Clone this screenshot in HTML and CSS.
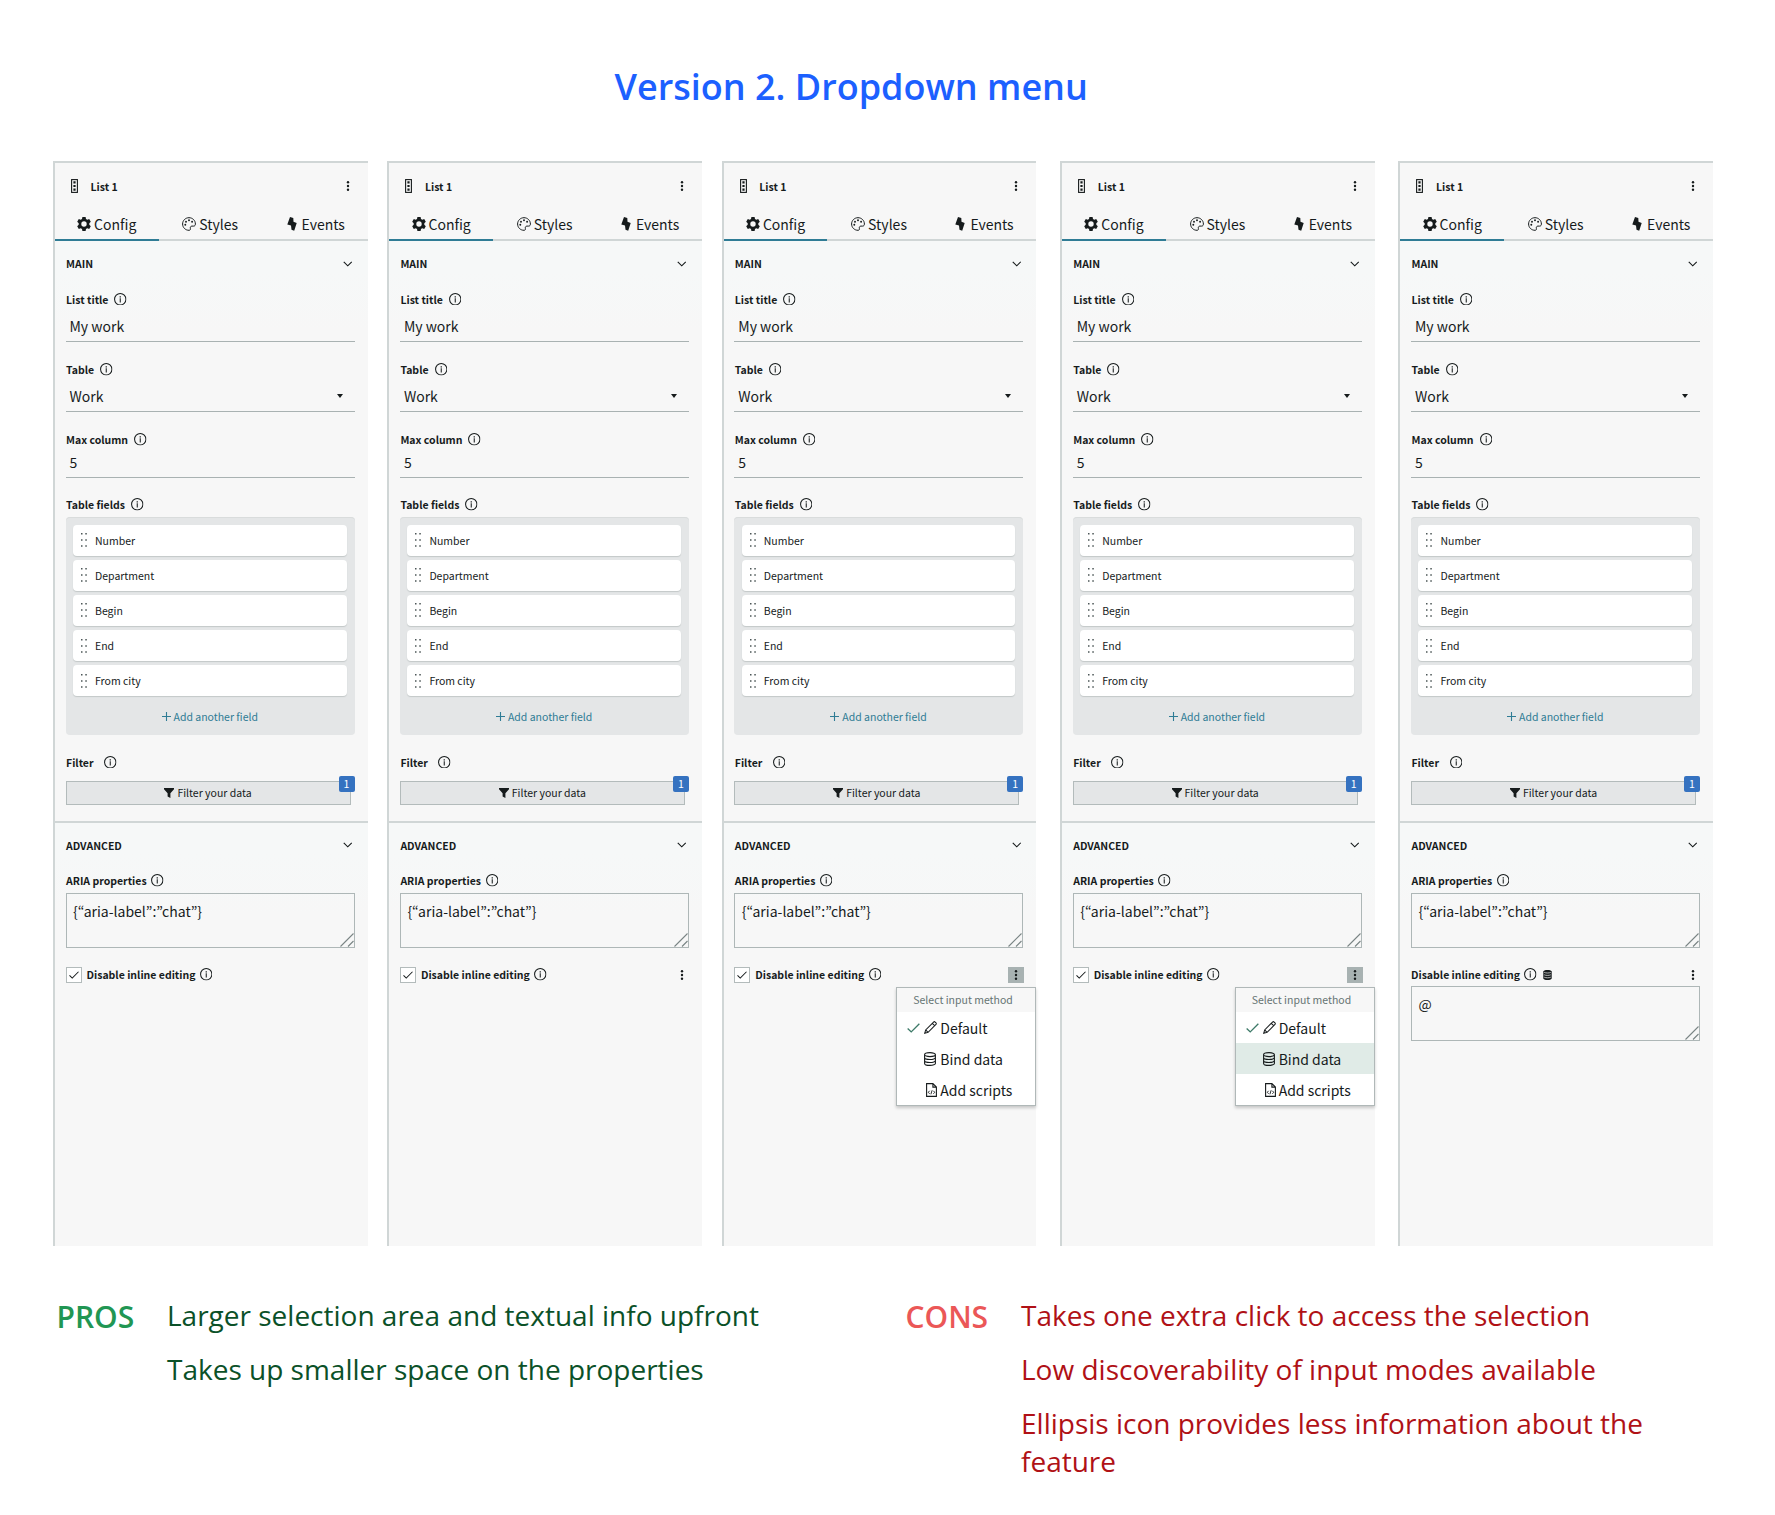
FILE: index.html
```html
<!DOCTYPE html>
<html lang="en">
<head>
<meta charset="utf-8">
<title>Version 2. Dropdown menu</title>
<link rel="stylesheet" href="styles.css">
</head>
<body>
<svg class="sprite" aria-hidden="true">
  <symbol id="list" viewBox="0 0 7 14"><rect x=".6" y=".6" width="5.8" height="12.8" fill="none" stroke="currentColor" stroke-width="1.1"/><path d="M2.4 2.2h2.2v2.2H2.400zM2.400 5.900h2.200v2.200H2.400zM2.400 9.600h2.200v2.200H2.400z"/></symbol>
  <symbol id="dots" viewBox="0 0 4 10"><circle cx="2" cy="1.200" r="1.200"/><circle cx="2" cy="5" r="1.200"/><circle cx="2" cy="8.800" r="1.200"/></symbol>
  <symbol id="gear" viewBox="0 0 14 14"><path fill-rule="evenodd" d="M5.400 0h3.200l.4 1.900 1.300.75 1.900-.65 1.600 2.700L12.300 6.200v1.600l1.500 1.500-1.600 2.700-1.900-.65-1.300.75-.4 1.900H5.400L5 12.100l-1.300-.75-1.900.65-1.600-2.700 1.500-1.500V6.200L.2 4.700 1.800 2l1.900.65L5 1.900zM7 4.300a2.700 2.700 0 1 0 0 5.400 2.700 2.700 0 0 0 0-5.400z"/></symbol>
  <symbol id="palette" viewBox="0 0 14 14"><path d="M7 .7C3.400.7.6 3.500.6 7S3.400 13.300 7 13.300c1.100 0 1.700-.8 1.400-1.800-.4-1.300.2-2.400 1.600-2.400h1.700c1.100 0 1.700-.9 1.700-2.100C13.400 3.500 10.600.7 7 .7z" fill="none" stroke="currentColor" stroke-width="1"/><circle cx="3.300" cy="7.700" r=".95"/><circle cx="4" cy="4.700" r=".95"/><circle cx="7" cy="3.200" r=".95"/><circle cx="10.100" cy="4.700" r=".95"/></symbol>
  <symbol id="bolt" viewBox="0 0 10 14"><path d="M3 0l3.300 1.100.2 3.700 3.200 1.300-2.500 7.700-2.700-1.100-.5-4.200L.3 7.400z"/></symbol>
  <symbol id="chevron" viewBox="0 0 10 6"><path d="M.8.7L5 4.900 9.200.7" fill="none" stroke="currentColor" stroke-width="1.200"/></symbol>
  <symbol id="info" viewBox="0 0 12 12"><circle cx="6" cy="6" r="5.450" fill="none" stroke="currentColor" stroke-width="1"/><path d="M5.500 5.100h1v3.900h-1zM5.400 3h1.200v1.200H5.400z"/></symbol>
  <symbol id="grip" viewBox="0 0 6 14"><path d="M0 0h1.500v1.500H0zM4.300 0h1.500v1.500H4.300zM0 6.200h1.500v1.500H0zM4.300 6.200h1.500v1.500H4.300zM0 12.300h1.500v1.500H0zM4.300 12.300h1.500v1.500H4.300z"/></symbol>
  <symbol id="plus" viewBox="0 0 9 9"><path d="M4.500 0v9M0 4.500h9" fill="none" stroke="currentColor" stroke-width="1.100"/></symbol>
  <symbol id="funnel" viewBox="0 0 10 10"><path d="M0 0h10v1.300L6.400 5.200V10L3.600 8.600V5.200L0 1.300z"/></symbol>
  <symbol id="grab" viewBox="0 0 14 14"><path d="M.5 13.500l13-13M8 13.500L13.500 8" fill="none" stroke="currentColor" stroke-width="1.100"/></symbol>
  <symbol id="check" viewBox="0 0 12 9"><path d="M.6 4.900l3.300 3.200L11.400.6" fill="none" stroke="currentColor" stroke-width="1.250"/></symbol>
  <symbol id="pencil" viewBox="0 0 14 14"><path d="M.8 13.200l1-3.600L10.300 1.100c.5-.5 1.200-.5 1.700 0l.9.900c.5.5.5 1.200 0 1.700l-8.500 8.500zM1.800 9.600l2.600 2.600M8.900 2.500l2.600 2.600" fill="none" stroke="currentColor" stroke-width="1.100"/></symbol>
  <symbol id="db" viewBox="0 0 12 14"><path d="M.6 2.600C.6 1.500 3 .6 6 .6s5.400.9 5.400 2-2.400 2-5.400 2-5.400-.9-5.400-2zv8.800c0 1.100 2.400 2 5.400 2s5.400-.9 5.400-2V2.600M.6 5.500c0 1.100 2.400 2 5.400 2s5.400-.9 5.400-2M.6 8.500c0 1.100 2.400 2 5.400 2s5.400-.9 5.400-2" fill="none" stroke="currentColor" stroke-width="1.100"/></symbol>
  <symbol id="dbfill" viewBox="0 0 9 10"><path d="M.3 1.600C.3.700 2 .1 4.500.1s4.200.6 4.200 1.500v6.800c0 .9-1.700 1.500-4.200 1.500S.3 9.300.3 8.400z"/><path class="bands" d="M1.200 2.400c1.700.8 4.900.8 6.600 0M1.200 4.800c1.700.8 4.900.8 6.600 0M1.200 7.200c1.700.8 4.900.8 6.600 0"/></symbol>
  <symbol id="script" viewBox="0 0 11 14"><path d="M.6.600h6.300l3.500 3.500v9.300H.6zM6.900.6v3.500h3.500" fill="none" stroke="currentColor" stroke-width="1.100"/><path d="M3.600 7.800L2.300 9.300l1.300 1.500M7.400 7.800l1.300 1.500-1.300 1.500M6.100 7.300l-1.200 4" fill="none" stroke="currentColor" stroke-width=".9"/></symbol>
</svg>

<h1 class="title">Version 2. Dropdown menu</h1>

<main class="panels">
  <section class="panel">
    <header class="head"><svg class="i-list"><use href="#list"/></svg><b>List 1</b><svg class="i-dots"><use href="#dots"/></svg></header>
    <nav class="tabs"><a class="tab active"><svg class="i-gear"><use href="#gear"/></svg>Config</a><a class="tab"><svg class="i-palette"><use href="#palette"/></svg>Styles</a><a class="tab"><svg class="i-bolt"><use href="#bolt"/></svg>Events</a></nav>
    <div class="group main">
      <h2>MAIN<svg class="i-chev"><use href="#chevron"/></svg></h2>
      <div class="label">List title<svg class="i-info"><use href="#info"/></svg></div>
      <div class="value">My work</div>
      <div class="label">Table<svg class="i-info"><use href="#info"/></svg></div>
      <div class="value">Work<i class="caret"></i></div>
      <div class="label">Max column<svg class="i-info"><use href="#info"/></svg></div>
      <div class="value short">5</div>
      <div class="label">Table fields<svg class="i-info"><use href="#info"/></svg></div>
      <ul class="fields">
        <li><svg class="i-grip"><use href="#grip"/></svg>Number</li>
        <li><svg class="i-grip"><use href="#grip"/></svg>Department</li>
        <li><svg class="i-grip"><use href="#grip"/></svg>Begin</li>
        <li><svg class="i-grip"><use href="#grip"/></svg>End</li>
        <li><svg class="i-grip"><use href="#grip"/></svg>From city</li>
        <li class="add"><svg class="i-plus"><use href="#plus"/></svg>Add another field</li>
      </ul>
      <div class="label wide">Filter<svg class="i-info"><use href="#info"/></svg></div>
      <div class="filter"><svg class="i-funnel"><use href="#funnel"/></svg>Filter your data<span class="badge">1</span></div>
    </div>
    <div class="group">
      <h2>ADVANCED<svg class="i-chev"><use href="#chevron"/></svg></h2>
      <div class="label tight">ARIA properties<svg class="i-info"><use href="#info"/></svg></div>
      <div class="area">{“aria-label”:”chat”}<svg class="i-grab"><use href="#grab"/></svg></div>
      <div class="option"><span class="box"><svg class="i-check"><use href="#check"/></svg></span>Disable inline editing<svg class="i-info"><use href="#info"/></svg></div>
    </div>
  </section>

  <section class="panel">
    <header class="head"><svg class="i-list"><use href="#list"/></svg><b>List 1</b><svg class="i-dots"><use href="#dots"/></svg></header>
    <nav class="tabs"><a class="tab active"><svg class="i-gear"><use href="#gear"/></svg>Config</a><a class="tab"><svg class="i-palette"><use href="#palette"/></svg>Styles</a><a class="tab"><svg class="i-bolt"><use href="#bolt"/></svg>Events</a></nav>
    <div class="group main">
      <h2>MAIN<svg class="i-chev"><use href="#chevron"/></svg></h2>
      <div class="label">List title<svg class="i-info"><use href="#info"/></svg></div>
      <div class="value">My work</div>
      <div class="label">Table<svg class="i-info"><use href="#info"/></svg></div>
      <div class="value">Work<i class="caret"></i></div>
      <div class="label">Max column<svg class="i-info"><use href="#info"/></svg></div>
      <div class="value short">5</div>
      <div class="label">Table fields<svg class="i-info"><use href="#info"/></svg></div>
      <ul class="fields">
        <li><svg class="i-grip"><use href="#grip"/></svg>Number</li>
        <li><svg class="i-grip"><use href="#grip"/></svg>Department</li>
        <li><svg class="i-grip"><use href="#grip"/></svg>Begin</li>
        <li><svg class="i-grip"><use href="#grip"/></svg>End</li>
        <li><svg class="i-grip"><use href="#grip"/></svg>From city</li>
        <li class="add"><svg class="i-plus"><use href="#plus"/></svg>Add another field</li>
      </ul>
      <div class="label wide">Filter<svg class="i-info"><use href="#info"/></svg></div>
      <div class="filter"><svg class="i-funnel"><use href="#funnel"/></svg>Filter your data<span class="badge">1</span></div>
    </div>
    <div class="group">
      <h2>ADVANCED<svg class="i-chev"><use href="#chevron"/></svg></h2>
      <div class="label tight">ARIA properties<svg class="i-info"><use href="#info"/></svg></div>
      <div class="area">{“aria-label”:”chat”}<svg class="i-grab"><use href="#grab"/></svg></div>
      <div class="option"><span class="box"><svg class="i-check"><use href="#check"/></svg></span>Disable inline editing<svg class="i-info"><use href="#info"/></svg><span class="more"><svg><use href="#dots"/></svg></span></div>
    </div>
  </section>

  <section class="panel">
    <header class="head"><svg class="i-list"><use href="#list"/></svg><b>List 1</b><svg class="i-dots"><use href="#dots"/></svg></header>
    <nav class="tabs"><a class="tab active"><svg class="i-gear"><use href="#gear"/></svg>Config</a><a class="tab"><svg class="i-palette"><use href="#palette"/></svg>Styles</a><a class="tab"><svg class="i-bolt"><use href="#bolt"/></svg>Events</a></nav>
    <div class="group main">
      <h2>MAIN<svg class="i-chev"><use href="#chevron"/></svg></h2>
      <div class="label">List title<svg class="i-info"><use href="#info"/></svg></div>
      <div class="value">My work</div>
      <div class="label">Table<svg class="i-info"><use href="#info"/></svg></div>
      <div class="value">Work<i class="caret"></i></div>
      <div class="label">Max column<svg class="i-info"><use href="#info"/></svg></div>
      <div class="value short">5</div>
      <div class="label">Table fields<svg class="i-info"><use href="#info"/></svg></div>
      <ul class="fields">
        <li><svg class="i-grip"><use href="#grip"/></svg>Number</li>
        <li><svg class="i-grip"><use href="#grip"/></svg>Department</li>
        <li><svg class="i-grip"><use href="#grip"/></svg>Begin</li>
        <li><svg class="i-grip"><use href="#grip"/></svg>End</li>
        <li><svg class="i-grip"><use href="#grip"/></svg>From city</li>
        <li class="add"><svg class="i-plus"><use href="#plus"/></svg>Add another field</li>
      </ul>
      <div class="label wide">Filter<svg class="i-info"><use href="#info"/></svg></div>
      <div class="filter"><svg class="i-funnel"><use href="#funnel"/></svg>Filter your data<span class="badge">1</span></div>
    </div>
    <div class="group">
      <h2>ADVANCED<svg class="i-chev"><use href="#chevron"/></svg></h2>
      <div class="label tight">ARIA properties<svg class="i-info"><use href="#info"/></svg></div>
      <div class="area">{“aria-label”:”chat”}<svg class="i-grab"><use href="#grab"/></svg></div>
      <div class="option"><span class="box"><svg class="i-check"><use href="#check"/></svg></span>Disable inline editing<svg class="i-info"><use href="#info"/></svg><span class="more open"><svg><use href="#dots"/></svg></span>
        <div class="menu">
          <div class="menu-head">Select input method</div>
          <div class="item"><svg class="i-tick"><use href="#check"/></svg><svg class="i-pencil"><use href="#pencil"/></svg>Default</div>
          <div class="item"><svg class="i-db"><use href="#db"/></svg>Bind data</div>
          <div class="item"><svg class="i-script"><use href="#script"/></svg>Add scripts</div>
        </div>
      </div>
    </div>
  </section>

  <section class="panel">
    <header class="head"><svg class="i-list"><use href="#list"/></svg><b>List 1</b><svg class="i-dots"><use href="#dots"/></svg></header>
    <nav class="tabs"><a class="tab active"><svg class="i-gear"><use href="#gear"/></svg>Config</a><a class="tab"><svg class="i-palette"><use href="#palette"/></svg>Styles</a><a class="tab"><svg class="i-bolt"><use href="#bolt"/></svg>Events</a></nav>
    <div class="group main">
      <h2>MAIN<svg class="i-chev"><use href="#chevron"/></svg></h2>
      <div class="label">List title<svg class="i-info"><use href="#info"/></svg></div>
      <div class="value">My work</div>
      <div class="label">Table<svg class="i-info"><use href="#info"/></svg></div>
      <div class="value">Work<i class="caret"></i></div>
      <div class="label">Max column<svg class="i-info"><use href="#info"/></svg></div>
      <div class="value short">5</div>
      <div class="label">Table fields<svg class="i-info"><use href="#info"/></svg></div>
      <ul class="fields">
        <li><svg class="i-grip"><use href="#grip"/></svg>Number</li>
        <li><svg class="i-grip"><use href="#grip"/></svg>Department</li>
        <li><svg class="i-grip"><use href="#grip"/></svg>Begin</li>
        <li><svg class="i-grip"><use href="#grip"/></svg>End</li>
        <li><svg class="i-grip"><use href="#grip"/></svg>From city</li>
        <li class="add"><svg class="i-plus"><use href="#plus"/></svg>Add another field</li>
      </ul>
      <div class="label wide">Filter<svg class="i-info"><use href="#info"/></svg></div>
      <div class="filter"><svg class="i-funnel"><use href="#funnel"/></svg>Filter your data<span class="badge">1</span></div>
    </div>
    <div class="group">
      <h2>ADVANCED<svg class="i-chev"><use href="#chevron"/></svg></h2>
      <div class="label tight">ARIA properties<svg class="i-info"><use href="#info"/></svg></div>
      <div class="area">{“aria-label”:”chat”}<svg class="i-grab"><use href="#grab"/></svg></div>
      <div class="option"><span class="box"><svg class="i-check"><use href="#check"/></svg></span>Disable inline editing<svg class="i-info"><use href="#info"/></svg><span class="more open"><svg><use href="#dots"/></svg></span>
        <div class="menu">
          <div class="menu-head">Select input method</div>
          <div class="item"><svg class="i-tick"><use href="#check"/></svg><svg class="i-pencil"><use href="#pencil"/></svg>Default</div>
          <div class="item hover"><svg class="i-db"><use href="#db"/></svg>Bind data</div>
          <div class="item"><svg class="i-script"><use href="#script"/></svg>Add scripts</div>
        </div>
      </div>
    </div>
  </section>

  <section class="panel">
    <header class="head"><svg class="i-list"><use href="#list"/></svg><b>List 1</b><svg class="i-dots"><use href="#dots"/></svg></header>
    <nav class="tabs"><a class="tab active"><svg class="i-gear"><use href="#gear"/></svg>Config</a><a class="tab"><svg class="i-palette"><use href="#palette"/></svg>Styles</a><a class="tab"><svg class="i-bolt"><use href="#bolt"/></svg>Events</a></nav>
    <div class="group main">
      <h2>MAIN<svg class="i-chev"><use href="#chevron"/></svg></h2>
      <div class="label">List title<svg class="i-info"><use href="#info"/></svg></div>
      <div class="value">My work</div>
      <div class="label">Table<svg class="i-info"><use href="#info"/></svg></div>
      <div class="value">Work<i class="caret"></i></div>
      <div class="label">Max column<svg class="i-info"><use href="#info"/></svg></div>
      <div class="value short">5</div>
      <div class="label">Table fields<svg class="i-info"><use href="#info"/></svg></div>
      <ul class="fields">
        <li><svg class="i-grip"><use href="#grip"/></svg>Number</li>
        <li><svg class="i-grip"><use href="#grip"/></svg>Department</li>
        <li><svg class="i-grip"><use href="#grip"/></svg>Begin</li>
        <li><svg class="i-grip"><use href="#grip"/></svg>End</li>
        <li><svg class="i-grip"><use href="#grip"/></svg>From city</li>
        <li class="add"><svg class="i-plus"><use href="#plus"/></svg>Add another field</li>
      </ul>
      <div class="label wide">Filter<svg class="i-info"><use href="#info"/></svg></div>
      <div class="filter"><svg class="i-funnel"><use href="#funnel"/></svg>Filter your data<span class="badge">1</span></div>
    </div>
    <div class="group">
      <h2>ADVANCED<svg class="i-chev"><use href="#chevron"/></svg></h2>
      <div class="label tight">ARIA properties<svg class="i-info"><use href="#info"/></svg></div>
      <div class="area">{“aria-label”:”chat”}<svg class="i-grab"><use href="#grab"/></svg></div>
      <div class="option bound">Disable inline editing<svg class="i-info"><use href="#info"/></svg><svg class="i-dbfill"><use href="#dbfill"/></svg><span class="more"><svg><use href="#dots"/></svg></span></div>
      <div class="area">@<svg class="i-grab"><use href="#grab"/></svg></div>
    </div>
  </section>
</main>

<footer class="notes">
  <div class="note pros"><h3>PROS</h3><div><p>Larger selection area and textual info upfront</p><p>Takes up smaller space on the properties</p></div></div>
  <div class="note cons"><h3>CONS</h3><div><p>Takes one extra click to access the selection</p><p>Low discoverability of input modes available</p><p>Ellipsis icon provides less information about the feature</p></div></div>
</footer>
</body>
</html>
```

FILE: styles.css
```css
* { box-sizing: border-box; }
body {
  margin: 0;
  background: #fff;
  color: #161b1c;
  font-family: "Noto Sans CJK KR", "Noto Sans", sans-serif;
  font-size: 10.5px;
}
h1, h2, h3, p, ul { margin: 0; padding: 0; }
svg { display: block; flex: none; fill: currentColor; }
.sprite { display: none; }

.title {
  height: 161px;
  padding: 62px 0 0 614.5px;
  font: 600 36px/49px "Open Sans", sans-serif;
  color: #1c60ff;
}

.panels {
  display: grid;
  grid-template-columns: 334.4px 334.4px 338.4px 338.3px 314px;
  padding-left: 53px;
}
.panel {
  width: 314.5px;
  height: 1085px;
  background: #f7f7f7;
  border: solid #d0d6d6;
  border-width: 2px 0 0 2px;
}

.head {
  display: flex;
  align-items: center;
  height: 47px;
  padding: 0 18px 1px 16px;
}
.head b { margin-left: 12.5px; }
.i-list { width: 7px; height: 14px; }
.i-dots { width: 4px; height: 10px; margin-left: auto; }

.tabs {
  display: flex;
  height: 31px;
  border-bottom: 2px solid #d0d6d6;
  font-size: 14px;
}
.tab {
  display: flex;
  align-items: center;
  justify-content: center;
  width: 103.5px;
  height: 31px;
  gap: 3px;
  padding-bottom: 3px;
}
.tab.active { border-bottom: 2px solid #2f7c95; padding-bottom: 1px; }
.tab:last-child { padding-left: 4px; }
.i-gear { width: 14px; height: 14px; }
.i-palette { width: 14px; height: 14px; }
.i-bolt { width: 10px; height: 14px; margin-right: 2px; }

.group { padding: 0 13px 0 10.5px; background: linear-gradient(#f6f8f8 30px, #f7f7f7 90px); }
.group.main { height: 581.5px; border-bottom: 2px solid #d0d6d6; }
h2 {
  display: flex;
  align-items: center;
  justify-content: space-between;
  height: 48px;
  padding: 0 2px 3px .5px;
  font-size: 10.5px;
  font-weight: 700;
}
.i-chev { width: 9.5px; height: 6px; }

.label, .option {
  display: flex;
  align-items: center;
  height: 20px;
  padding-left: .5px;
  font-weight: 700;
}
.i-info { width: 12.5px; height: 12.5px; margin-left: 6px; }
.wide .i-info { margin-left: 10.5px; }
.tight .i-info, .option .i-info { margin-left: 4.5px; }

.value {
  display: flex;
  align-items: center;
  height: 33px;
  margin-bottom: 17.3px;
  padding: 1px 15px 0 4px;
  border-bottom: 1px solid #a9b2b2;
  font-size: 14px;
}
.value.short { height: 28px; padding-bottom: 4px; margin-bottom: 17px; }
.caret { margin-left: auto; margin-right: -3px; border: solid transparent; border-width: 4.5px 3.5px 0; border-top-color: #161b1c; }

.fields {
  display: flex;
  flex-direction: column;
  gap: 4.2px;
  height: 218.5px;
  margin: 2px 0 17px;
  padding: 8px 8px 0 7.5px;
  background: #e4e6e7;
  border-radius: 4px;
  box-shadow: inset 0 1px 0 #d9dcdc;
  list-style: none;
}
.fields li {
  display: flex;
  align-items: center;
  height: 31px;
  padding-left: 8px;
  background: #fff;
  border-radius: 4px;
  box-shadow: 0 1px 1px #c3c8c8;
}
.i-grip { width: 6px; height: 14px; margin-right: 8px; color: #4b5556; }
.fields .add { justify-content: center; padding: 0; background: none; box-shadow: none; color: #2f7c95; }
.i-plus { width: 9px; height: 9px; margin-right: 3px; }

.filter {
  position: relative;
  display: flex;
  align-items: center;
  justify-content: center;
  gap: 3px;
  width: 285px;
  height: 24px;
  margin-top: 8.5px;
  background: #e4e6e7;
  border: 1px solid #b3bbbb;
}
.i-funnel { width: 10px; height: 10px; }
.badge {
  position: absolute;
  top: -6px;
  right: -5px;
  width: 16px;
  height: 16px;
  border-radius: 2px;
  background: #3572c0;
  color: #fff;
  text-align: center;
  line-height: 15px;
}

.area {
  position: relative;
  height: 55px;
  margin-top: 2px;
  padding-left: 6.5px;
  border: 1px solid #aeb7b7;
  font-size: 14px;
  line-height: 35px;
}
.i-grab { position: absolute; right: 0; bottom: 0; width: 14px; height: 14px; color: #7a8585; }

.option { position: relative; height: 17px; margin-top: 18.5px; padding-left: 0; }
.box {
  display: flex;
  align-items: center;
  justify-content: center;
  width: 16px;
  height: 16px;
  margin-right: 5px;
  background: #fff;
  border: 1px solid #b3bbbb;
}
.i-check { width: 10px; height: 8px; }
.i-dbfill { width: 9px; height: 10px; margin-left: 6.5px; }
.bands { fill: none; stroke: #f7f7f7; stroke-width: .7; }
.more {
  display: flex;
  align-items: center;
  justify-content: center;
  width: 16px;
  height: 16px;
  margin-left: auto;
  margin-right: -1px;
}
.more svg { width: 4px; height: 10px; }
.more.open { background: #a8b2b2; }
.bound + .area { margin-top: 3px; }

.menu {
  position: absolute;
  top: 21px;
  right: -13px;
  width: 140px;
  height: 119px;
  background: #fff;
  border: 1px solid #b0b8b8;
  box-shadow: 0 2px 3px rgba(0, 0, 0, .2);
  font-size: 14px;
  font-weight: 400;
}
.menu-head {
  height: 24px;
  background: #f7f7f7;
  color: #667473;
  font-size: 10.5px;
  line-height: 23px;
  padding-left: 16px;
}
.item { display: flex; align-items: center; height: 31px; padding-left: 27px; }
.item.hover { background: #e0ebe7; }
.i-tick { width: 13px; height: 10px; margin: 0 4px 0 -17px; color: #3d7a68; }
.i-pencil { width: 13px; height: 13px; margin-right: 3px; }
.i-db { width: 12px; height: 14px; margin-right: 4px; }
.i-script { width: 11px; height: 14px; margin: 0 3px 0 2px; }

.notes {
  display: flex;
  padding: 50px 0 0 56.5px;
  font: 400 28px/38px "Open Sans", sans-serif;
}
.note { display: flex; }
.note p { margin-bottom: 16px; }
h3 { font-size: 30px; line-height: 41px; font-weight: 600; }
.pros { width: 849px; color: #0b5128; }
.pros h3 { width: 110.5px; color: #219653; }
.cons { width: 765px; color: #b01116; }
.cons h3 { width: 115.5px; color: #eb5757; }
.cons div { width: 640px; }
```
